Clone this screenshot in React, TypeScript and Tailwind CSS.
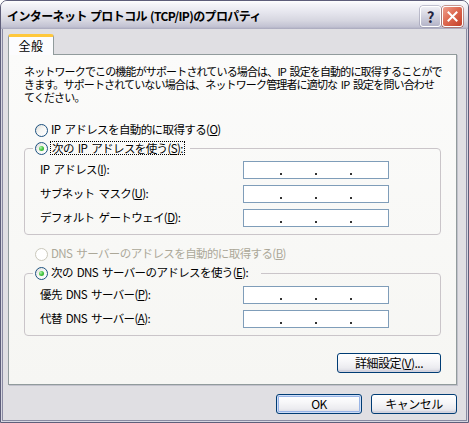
import React from "react";

function Radio({ checked, disabled }: { checked?: boolean; disabled?: boolean }) {
  return (
    <span
      className={
        disabled
          ? "inline-flex shrink-0 w-[13px] h-[13px] rounded-full border border-[#CAC8BB] bg-white"
          : "inline-flex shrink-0 items-center justify-center w-[13px] h-[13px] rounded-full border border-[#1C5180] bg-[linear-gradient(135deg,#DCDCD7_0%,#F6F6F4_45%,#FFFFFF_100%)]"
      }
    >
      {checked && (
        <span className="w-[5px] h-[5px] rounded-full bg-[radial-gradient(circle_at_35%_35%,#B6F4B0_0%,#4BC847_45%,#1F9C1F_100%)]" />
      )}
    </span>
  );
}

function IpBox() {
  return (
    <div className="w-[146px] h-[18px] border border-[#7F9DB9] bg-white flex items-end pb-[3px] pl-[36px] gap-[33px]">
      <span className="w-[2px] h-[2px] bg-[#333]" />
      <span className="w-[2px] h-[2px] bg-[#333]" />
      <span className="w-[2px] h-[2px] bg-[#333]" />
    </div>
  );
}

function Row({ children }: { children: React.ReactNode }) {
  return (
    <div className="flex items-center h-[18px]">
      <div className="w-[203px] whitespace-nowrap">{children}</div>
      <IpBox />
    </div>
  );
}

function XPButton({ children, w, def }: { children: React.ReactNode; w: string; def?: boolean }) {
  return (
    <div
      className={
        (def
          ? "shadow-[inset_0_0_0_1px_#CEDDF7,inset_0_0_0_2px_#98B4E6] "
          : "shadow-[inset_0_-2px_0_#D3D3DE] ") +
        w +
        " h-[20px] flex items-center justify-center rounded-[3px] border border-[#003C74] bg-[linear-gradient(to_bottom,#FFFFFF_0%,#F7F7F9_40%,#ECECF0_75%,#DADAE3_100%)] text-[12px] tracking-[-0.5px] whitespace-nowrap"
      }
    >
      {children}
    </div>
  );
}

export default function App() {
  return (
    <div className="w-[469px] h-[423px] font-['Noto_Sans_CJK_JP',sans-serif] text-black text-[11.5px] leading-none tracking-[-0.6px] [word-spacing:2px]">
      <div className="w-full h-full flex flex-col rounded-t-[7px] border border-[#5E5E7A] bg-[#E0DFE3] overflow-hidden">
        {/* title bar */}
        <div className="h-[28px] shrink-0 flex items-center pl-[6px] pr-[5px] bg-[linear-gradient(to_bottom,#FFFFFF_0%,#F4F4F8_12%,#E6E6EE_40%,#D6D6E0_70%,#C2C2D2_92%,#A8A8BC_100%)]">
          <span className="text-[12px] font-bold tracking-[-0.6px] [word-spacing:1px] whitespace-nowrap pt-px">
            インターネット プロトコル (TCP/IP)のプロパティ
          </span>
          <div className="ml-auto flex gap-[1px] mt-[3px]">
            <div className="w-[21px] h-[21px] rounded-[3px] border border-white bg-[linear-gradient(to_bottom,#EEEEF4_0%,#D4D4E0_45%,#B4B4C8_100%)] shadow-[0_0_0_0.5px_#8F8FA8] flex items-center justify-center text-[15px] font-bold text-[#23233F] tracking-normal">
              ?
            </div>
            <div className="w-[21px] h-[21px] rounded-[3px] border border-white bg-[linear-gradient(135deg,#F0A08E_0%,#DE6A52_45%,#C4402A_100%)] shadow-[0_0_0_0.5px_#9A3A2A] flex items-center justify-center">
              <svg width="11" height="11" viewBox="0 0 11 11">
                <path d="M1.5 1.5 L9.5 9.5 M9.5 1.5 L1.5 9.5" stroke="#FFFFFF" strokeWidth="2" strokeLinecap="square" />
              </svg>
            </div>
          </div>
        </div>

        {/* body with frame */}
        <div className="flex-1 flex flex-col border-x border-b border-[#D6D6E0]">
          <div className="flex-1 flex flex-col border-x border-b border-[#8A8AA2]">
            <div className="ml-[5px] mt-[5px] w-[449px] flex flex-col">
              {/* tab */}
              <div className="flex">
                <div className="relative z-10 -mb-px h-[21px] w-[46px] rounded-t-[3px] border-x border-[#919B9C] border-t-[3px] border-t-[#FFC83C] bg-[#FCFCFE] flex items-center justify-center text-[12px] tracking-[0.5px] pb-[1px]">
                  全般
                </div>
              </div>
              {/* panel */}
              <div className="h-[331px] border border-[#919B9C] bg-[linear-gradient(to_bottom,#FBFBFA_0%,#F6F6F3_100%)] shadow-[1px_1px_0_#C2C2CC] px-[15px] pt-[10px] flex flex-col">
                <div className="leading-[13px] text-[11px] tracking-[-0.85px] whitespace-nowrap">
                  <div>ネットワークでこの機能がサポートされている場合は、IP 設定を自動的に取得することがで</div>
                  <div>きます。サポートされていない場合は、ネットワーク管理者に適切な IP 設定を問い合わせ</div>
                  <div>てください。</div>
                </div>

                <div className="mt-[18px] h-[16px] flex items-center pl-[11px] gap-[3px] whitespace-nowrap">
                  <Radio />
                  <span>
                    IP アドレスを自動的に取得する(<u>O</u>)
                  </span>
                </div>

                <fieldset className="mt-[2px] border border-[#CAC5C9] rounded-[4px] px-0">
                  <legend className="ml-[8px] w-[157px] h-[16px] flex items-center pl-[2px] gap-[2px] whitespace-nowrap">
                    <Radio checked />
                    <span className="border border-dotted border-black px-[1px] leading-[12px]">
                      次の IP アドレスを使う(<u>S</u>):
                    </span>
                  </legend>
                  <div className="flex flex-col gap-[6px] pt-[5px] pb-[7px] pl-[15px]">
                    <Row>
                      IP アドレス(<u>I</u>):
                    </Row>
                    <Row>
                      サブネット マスク(<u>U</u>):
                    </Row>
                    <Row>
                      デフォルト ゲートウェイ(<u>D</u>):
                    </Row>
                  </div>
                </fieldset>

                <div className="mt-[11px] h-[16px] flex items-center pl-[11px] gap-[3px] whitespace-nowrap text-[#ACA899]">
                  <Radio disabled />
                  <span>
                    DNS サーバーのアドレスを自動的に取得する(<u>B</u>)
                  </span>
                </div>

                <fieldset className="mt-[3px] border border-[#CAC5C9] rounded-[4px] px-0">
                  <legend className="ml-[8px] w-[228px] h-[16px] flex items-center pl-[2px] gap-[3px] whitespace-nowrap">
                    <Radio checked />
                    <span>
                      次の DNS サーバーのアドレスを使う(<u>E</u>):
                    </span>
                  </legend>
                  <div className="flex flex-col gap-[6px] pt-[5px] pb-[7px] pl-[15px]">
                    <Row>
                      優先 DNS サーバー(<u>P</u>):
                    </Row>
                    <Row>
                      代替 DNS サーバー(<u>A</u>):
                    </Row>
                  </div>
                </fieldset>

                <div className="mt-[17px] flex justify-end">
                  <XPButton w="w-[104px]">
                    詳細設定(<u>V</u>)...
                  </XPButton>
                </div>
              </div>

              {/* bottom buttons */}
              <div className="mt-[9px] flex justify-end gap-[9px]">
                <XPButton w="w-[86px]" def>
                  OK
                </XPButton>
                <XPButton w="w-[86px]">キャンセル</XPButton>
              </div>
            </div>
          </div>
        </div>
      </div>
    </div>
  );
}
